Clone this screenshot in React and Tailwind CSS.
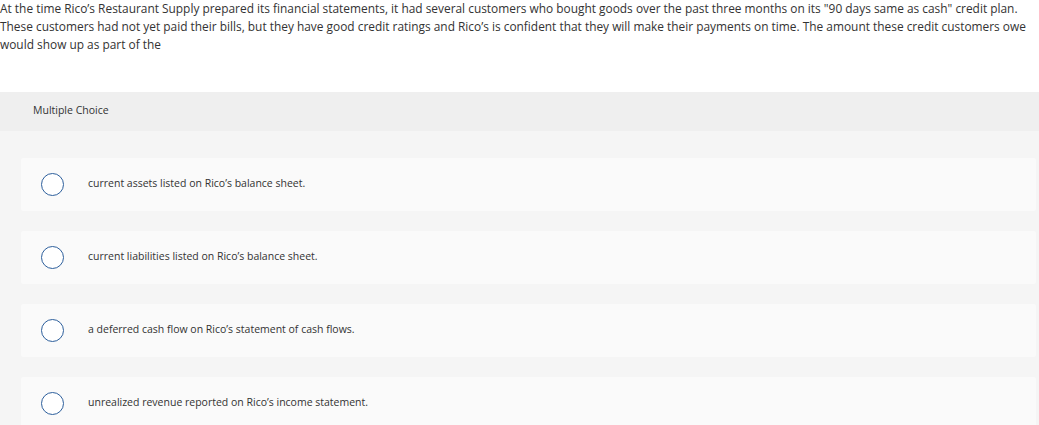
export default function App() {
  const choices = [
    "current assets listed on Rico\u2019s balance sheet.",
    "current liabilities listed on Rico\u2019s balance sheet.",
    "a deferred cash flow on Rico\u2019s statement of cash flows.",
    "unrealized revenue reported on Rico\u2019s income statement.",
  ];

  return (
    <div className="w-[1039px] h-[425px] overflow-hidden bg-white text-[#333] font-['Open_Sans','Liberation_Sans',sans-serif] flex flex-col">
      <p className="text-[11.9px] leading-[18px] -mt-[1px] whitespace-nowrap">
        At the time Rico&rsquo;s Restaurant Supply prepared its financial statements, it had several customers who bought goods over the past three months on its "90 days same as cash" credit plan.
        <br />
        These customers had not yet paid their bills, but they have good credit ratings and Rico&rsquo;s is confident that they will make their payments on time. The amount these credit customers owe
        <br />
        would show up as part of the
      </p>

      <div className="mt-[38.5px] flex-1 rounded-t-[3px] bg-[#f5f5f5]">
        <div className="h-[39px] flex items-center pl-[33px] bg-[#efefef] text-[10.5px] text-[#333]">
          Multiple Choice
        </div>
        <div className="pt-[27px] pl-[21px] pr-[3px] flex flex-col gap-[20px]">
          {choices.map((c) => (
            <div
              key={c}
              className="h-[53px] shrink-0 rounded-[2px] bg-[#fafafa] flex items-center"
            >
              <span className="ml-[20px] w-[23px] h-[23px] rounded-full border-[1.5px] border-[#2d5f9c] bg-white shrink-0" />
              <span className="ml-[24px] text-[10.5px] text-[#333]">{c}</span>
            </div>
          ))}
        </div>
      </div>
    </div>
  );
}
